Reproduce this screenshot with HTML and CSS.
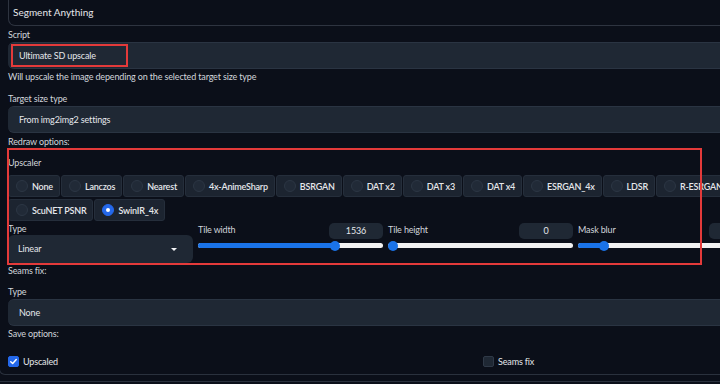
FILE: index.html
```html
<!DOCTYPE html>
<html>
<head>
<meta charset="utf-8">
<link rel="stylesheet" href="styles.css">
</head>
<body>
<div class="outer">
  <div class="acc-top">Segment Anything</div>
  <div class="content">
    <div class="label lbl-script">Script</div>
    <div class="dropdown">Ultimate SD upscale</div>
    <div class="help">Will upscale the image depending on the selected target size type</div>
    <div class="label lbl-target">Target size type</div>
    <div class="dropdown">From img2img2 settings</div>
    <div class="label lbl-redraw">Redraw options:</div>
    <div class="label lbl-upscaler">Upscaler</div>
    <div class="radios">
      <div class="radio"><span class="dot"></span>None</div>
      <div class="radio"><span class="dot"></span>Lanczos</div>
      <div class="radio"><span class="dot"></span>Nearest</div>
      <div class="radio"><span class="dot"></span>4x-AnimeSharp</div>
      <div class="radio"><span class="dot"></span>BSRGAN</div>
      <div class="radio"><span class="dot"></span>DAT x2</div>
      <div class="radio"><span class="dot"></span>DAT x3</div>
      <div class="radio"><span class="dot"></span>DAT x4</div>
      <div class="radio"><span class="dot"></span>ESRGAN_4x</div>
      <div class="radio"><span class="dot"></span>LDSR</div>
      <div class="radio"><span class="dot"></span>R-ESRGAN 4x+</div>
    </div>
    <div class="radios row2">
      <div class="radio"><span class="dot"></span>ScuNET PSNR</div>
      <div class="radio"><span class="dot on"></span>SwinIR_4x</div>
    </div>
    <div class="params">
      <div class="col">
        <div class="label">Type</div>
        <div class="dropdown select">Linear<span class="caret"></span></div>
      </div>
      <div class="col">
        <div class="slider-head"><span>Tile width</span><span class="num">1536</span></div>
        <div class="track"><div class="fill" style="width:74%"></div><div class="thumb" style="left:74%"></div></div>
      </div>
      <div class="col">
        <div class="slider-head"><span>Tile height</span><span class="num">0</span></div>
        <div class="track"><div class="fill" style="width:0%"></div><div class="thumb" style="left:2.5%"></div></div>
      </div>
      <div class="col">
        <div class="slider-head"><span>Mask blur</span><span class="num">8</span></div>
        <div class="track"><div class="fill" style="width:14%"></div><div class="thumb" style="left:14%"></div></div>
      </div>
      <div class="col">
        <div class="slider-head"><span>Padding</span><span class="num">32</span></div>
        <div class="track"><div class="fill" style="width:25%"></div><div class="thumb" style="left:25%"></div></div>
      </div>
    </div>
    <div class="label lbl-seams">Seams fix:</div>
    <div class="label lbl-type2">Type</div>
    <div class="dropdown">None</div>
    <div class="label lbl-save">Save options:</div>
    <div class="checks">
      <label class="check"><span class="box on"><svg viewBox="0 0 12 12" width="11" height="11"><path d="M3 6.2 L5.1 8.2 L9 3.8" fill="none" stroke="#fff" stroke-width="1.6" stroke-linecap="round" stroke-linejoin="round"/></svg></span>Upscaled</label>
      <label class="check"><span class="box"></span>Seams fix</label>
    </div>
  </div>
  <div class="hl hl-script"></div>
  <div class="hl hl-redraw"></div>
</div>
<div class="next-panel"></div>
</body>
</html>
```
FILE: styles.css
```css
* { box-sizing: border-box; }
html, body {
  margin: 0;
  padding: 0;
  background: #0b0f19;
  overflow: hidden;
  width: 720px;
  height: 384px;
}
body {
  font-family: "Lato", "Noto Sans", sans-serif;
  color: #e5e7eb;
  font-size: 9px;
  letter-spacing: -0.15px;
}
.outer {
  display: flow-root;
  position: relative;
  width: 968px;
  margin-left: -1px;
  border: 1px solid #2a313d;
  border-top: none;
  border-radius: 0 0 6px 6px;
  padding-bottom: 6px;
}
.acc-top {
  margin-left: 8px;
  margin-top: -6px;
  height: 32px;
  border: 1px solid #2e3440;
  border-top: none;
  border-radius: 0 0 7px 7px;
  padding: 6px 0 0 4px;
  line-height: 25px;
  font-size: 10px;
  letter-spacing: 0;
  color: #e5e7eb;
}
.content {
  padding-left: 8px;
  width: 959px;
}
.label {
  line-height: 12px;
  height: 12px;
  color: #d1d5db;
}
.lbl-script { margin-top: 3px; }
.dropdown {
  margin-top: 1px;
  height: 27px;
  background: #1f2834;
  border-top: 1px solid #2a3442;
  border-bottom: 1px solid #2a3442;
  border-radius: 6px;
  padding-left: 11px;
  line-height: 25px;
  color: #e5e7eb;
}
.help { margin-top: 2px; line-height: 12px; color: #d1d5db; }
.lbl-target { margin-top: 10px; }
.lbl-redraw { margin-top: 3px; }
.lbl-upscaler { margin-top: 9px; }
.radios {
  display: flex;
  gap: 1px;
  margin-top: 6px;
  flex-wrap: nowrap;
}
.row2 { margin-top: 2px; }
.radio {
  display: flex;
  align-items: center;
  gap: 4px;
  height: 22px;
  padding: 0 6px 0 7px;
  background: #1c2430;
  border: 1px solid #252e3b;
  border-radius: 3px;
  white-space: nowrap;
  font-weight: 600;
  letter-spacing: -0.2px;
  color: #e5e7eb;
  flex-shrink: 0;
}
.dot {
  width: 12px;
  height: 12px;
  border-radius: 50%;
  background: #212a37;
  border: 1px solid #2c3644;
  flex-shrink: 0;
}
.dot.on {
  background: #2468ea;
  border-color: #2468ea;
  position: relative;
}
.dot.on::after {
  content: "";
  position: absolute;
  left: 3px; top: 3px;
  width: 4px; height: 4px;
  border-radius: 50%;
  background: #fff;
}
.params {
  display: grid;
  grid-template-columns: repeat(5, 185px);
  gap: 5px;
  margin-top: 2px;
  width: 945px;
}
.col { display: flex; flex-direction: column; }
.select {
  height: 28px;
  margin-top: 0;
  border: none;
  padding-left: 10px;
  line-height: 28px;
  position: relative;
}
.caret {
  position: absolute;
  right: 16px;
  top: 13px;
  border-left: 3px solid transparent;
  border-right: 3px solid transparent;
  border-top: 3px solid #f3f4f6;
}
.slider-head {
  display: flex;
  justify-content: space-between;
  align-items: flex-start;
  height: 16px;
  color: #d1d5db;
  line-height: 14px;
}
.num {
  width: 54px;
  height: 16px;
  background: #1f2834;
  border-radius: 5px;
  text-align: center;
  line-height: 16px;
  color: #e5e7eb;
}
.track {
  position: relative;
  margin-top: 4px;
  height: 5px;
  border-radius: 3px;
  background: #f1f1f1;
}
.fill {
  height: 5px;
  border-radius: 3px;
  background: #1a73e8;
}
.thumb {
  position: absolute;
  top: -2.5px;
  width: 10px;
  height: 10px;
  margin-left: -5px;
  border-radius: 50%;
  background: #1a73e8;
}
.lbl-seams { margin-top: 2px; }
.lbl-type2 { margin-top: 9px; }
.lbl-save { margin-top: 2px; }
.checks {
  display: grid;
  grid-template-columns: 475px 475px;
  margin-top: 15px;
}
.check {
  display: flex;
  align-items: center;
  gap: 4px;
  height: 13px;
  color: #e5e7eb;
}
.box {
  width: 11px;
  height: 11px;
  border-radius: 2px;
  background: #1f2834;
  border: 1px solid #2f3947;
  display: flex;
}
.box.on { background: #2468ea; border-color: #2468ea; }
.box svg { margin: -1px; }
.hl {
  position: absolute;
  border: 2px solid #e43a3a;
}
.hl-script { left: 11px; top: 44px; width: 117px; height: 23px; }
.hl-redraw { left: 7px; top: 148px; width: 695px; height: 117px; }
.next-panel {
  margin-top: 6px;
  border-top: 1px solid #2a313d;
  height: 10px;
}
```
